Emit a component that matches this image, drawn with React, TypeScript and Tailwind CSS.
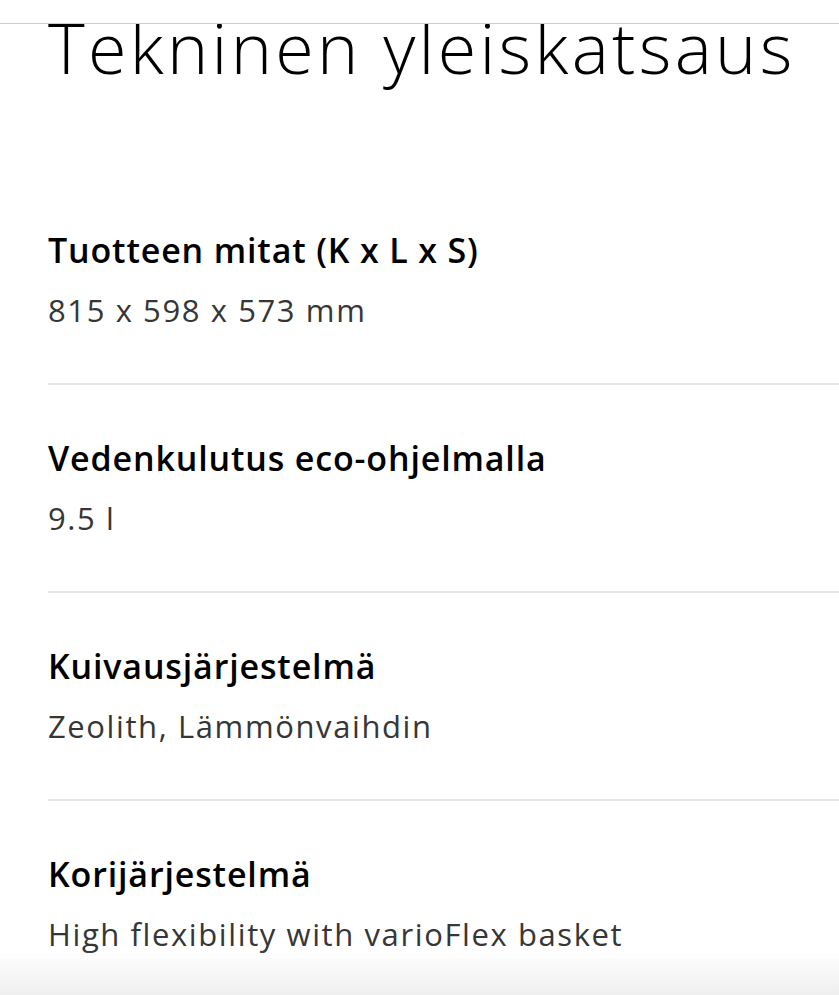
const specs = [
  { label: "Tuotteen mitat (K x L x S)", value: "815 x 598 x 573 mm" },
  { label: "Vedenkulutus eco-ohjelmalla", value: "9.5 l" },
  { label: "Kuivausjärjestelmä", value: "Zeolith, Lämmönvaihdin" },
  { label: "Korijärjestelmä", value: "High flexibility with varioFlex basket" },
];

export default function App() {
  return (
    <div className="min-h-screen bg-white font-['Open_Sans',sans-serif] text-black">
      <div className="h-6 border-b border-[#cccccc]" />
      <main className="overflow-hidden pl-12">
        <h1 className="-mt-[12px] whitespace-nowrap text-[70px] font-light leading-[70px] tracking-[3.3px]">
          Tekninen yleiskatsaus
        </h1>
        <div className="mt-[95px]">
          {specs.map((s, i) => (
            <div
              key={s.label}
              className={
                "flex flex-col gap-5 pt-[53px] pb-[53px] " +
                (i < specs.length - 1 ? "border-b-2 border-[#e6e6e6]" : "")
              }
            >
              <div className="text-[34px] font-semibold leading-[40px] tracking-[0.85px]">{s.label}</div>
              <div className="text-[31px] leading-[40px] tracking-[1.6px] text-[#363636]">{s.value}</div>
            </div>
          ))}
        </div>
      </main>
      <div className="pointer-events-none fixed inset-x-0 bottom-0 h-[45px] bg-gradient-to-b from-white/0 to-[#efefef]" />
    </div>
  );
}
